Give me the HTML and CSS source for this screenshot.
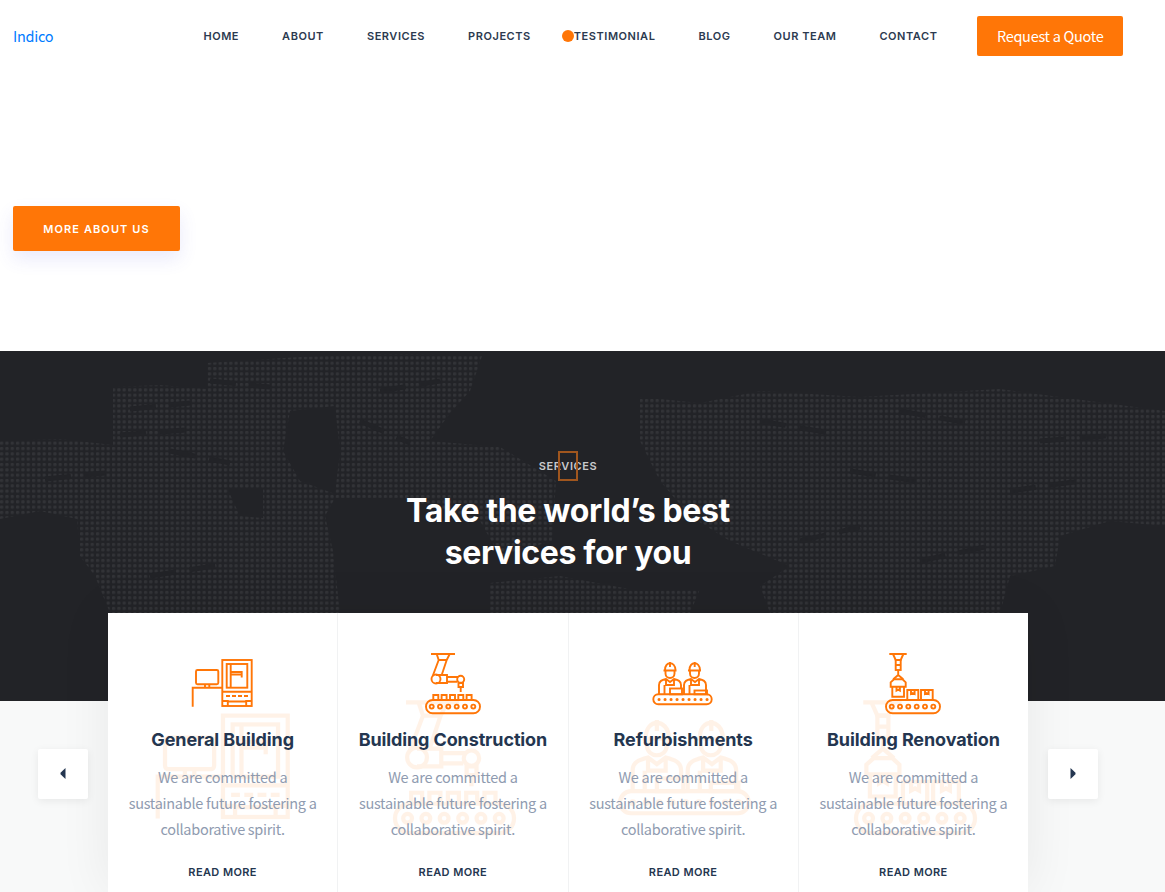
FILE: index.html
```html
<!DOCTYPE html>
<html lang="en">
<head>
  <meta charset="UTF-8">
  <meta name="viewport" content="width=device-width, initial-scale=1.0">
  <link rel="stylesheet" href="styles.css">
  <title>Indico</title>
</head>
<body>

  <!-- icons used twice per card: once small, once as the faint watermark -->
  <svg class="sprite" aria-hidden="true">
    <symbol id="ic_building" viewBox="0 0 64 64">
      <rect x="5" y="18" width="22.3" height="14.3" rx="1.5"/>
      <path d="M14 32.3v3.4M18.3 32.3v3.4M31.3 35.7H1.7v19"/>
      <rect x="31.3" y="8" width="29.4" height="46" />
      <rect x="35.7" y="12" width="20.6" height="23.7"/>
      <path d="M39.7 12v23.7M39.7 20h11v2.5h-11M50.7 22.5v3M31.3 39.7h29.4M35 44h4M41 44h4M47 44h4M53 44h4M31.3 49h5.5v5M60.7 49h-5.5v5M36.8 49.5h18.4"/>
    </symbol>
    <symbol id="ic_construction" viewBox="0 0 64 64">
      <path d="M10 2h24M15.7 2l2 6h8l3-6M17.7 8l-6 16M25.7 8l-5 15"/>
      <circle cx="15" cy="27" r="4.5"/>
      <path d="M15 23h11v8H15M26 25h11M26 29.7h10"/>
      <circle cx="39.7" cy="27.3" r="3.5"/>
      <path d="M37.5 31h4.5v4h-4.5zM39.7 35v5"/>
      <rect x="5" y="48" width="54" height="13.3" rx="6.6"/>
      <circle cx="10.7" cy="54.6" r="2"/><circle cx="19" cy="54.6" r="2"/><circle cx="27.3" cy="54.6" r="2"/>
      <circle cx="35.7" cy="54.6" r="2"/><circle cx="44" cy="54.6" r="2"/><circle cx="52.3" cy="54.6" r="2"/>
      <path d="M12.3 48v-5h5v5M20.6 48v-5h5v5M29 48v-5h5v5M37.3 48v-5h5v5M45.6 48v-5h5v5"/>
    </symbol>
    <symbol id="ic_refurb" viewBox="0 0 64 64">
      <rect x="2.3" y="42.3" width="58.4" height="10" rx="5"/>
      <path d="M8 47.500h.1M14 47.500h.1M20 47.500h.1M26 47.500h.1M32 47.500h.1M38 47.500h.1M44 47.500h.1M50 47.500h.1M56 47.500h.1" stroke-width="3" stroke-linecap="round"/>
      <path d="M12.5 18.5h13M14 18c0-9 10-9 10.500 0M19 10v5M14.500 19v2.500c0 6 9 6 9 0V19"/>
      <path d="M8 42V33c0-4 3-5 7-6l4 3 4-3c4 1 7 2 7 6v4M13.500 42v-9M15 27v6h8v-6"/>
      <rect x="19" y="36.500" width="12" height="5.800"/>
      <path d="M37 18.500h13M38.500 18c0-9 10-9 10.500 0M43.700 10v5M39 19v2.500c0 6 9 6 9 0V19"/>
      <path d="M33 42V33c0-4 3-5 7-6l4 3 4-3c4 1 7 2 7 6v9M38.500 42v-9M40 27v6h8v-6"/>
      <rect x="43.500" y="38.500" width="12.500" height="3.800"/>
    </symbol>
    <symbol id="ic_renovation" viewBox="0 0 64 64">
      <path d="M8.300 2h17.400M12 2l2.700 6h5l2.700-6"/>
      <rect x="14.700" y="8" width="5" height="10"/>
      <path d="M14.700 13h5M17.200 18v5M17.200 23l-5 4.300M17.200 23l5 4.300"/>
      <path d="M13 27.300h8.500l3.200 3v4.400H9.700v-4.400z"/>
      <path d="M11.300 34.700v10H23v-10M15.500 34.700v4l1.700-1 1.700 1v-4"/>
      <path d="M26.300 48V38h11v10M30 38v4l1.800-1 1.800 1v-4M40 48V38h11.700v10M44 38v4l1.800-1 1.800 1v-4"/>
      <rect x="5" y="48" width="54" height="13.300" rx="6.600"/>
      <circle cx="10.700" cy="54.600" r="2"/><circle cx="19" cy="54.600" r="2"/><circle cx="27.300" cy="54.600" r="2"/>
      <circle cx="35.700" cy="54.600" r="2"/><circle cx="44" cy="54.600" r="2"/><circle cx="52.300" cy="54.600" r="2"/>
    </symbol>
  </svg>

  <header class="top_bar">
    <a class="logo" href="#">Indico</a>
    <nav class="main_nav">
      <a href="#">Home</a>
      <a href="#">About</a>
      <a href="#">Services</a>
      <a href="#">Projects</a>
      <a class="nav_dot" href="#">Testimonial</a>
      <a href="#">Blog</a>
      <a href="#">Our Team</a>
      <a href="#">Contact</a>
    </nav>
    <a class="quote_btn" href="#">Request a Quote</a>
  </header>

  <section class="hero">
    <a class="more_btn" href="#">More About Us</a>
  </section>

  <section class="services_dark">
    <svg class="world_map" viewBox="0 0 1165 350" aria-hidden="true">
      <defs>
        <pattern id="dots" width="5.33" height="5.33" patternUnits="userSpaceOnUse">
          <rect width="3.2" height="3.2" rx="1" fill="#323337"/>
        </pattern>
      </defs>
      <path fill="url(#dots)" fill-rule="evenodd" d="M0 90L60 88L113 94L113 36L160 34L207 38L207 12L300 6L400 3L482 5L470 40L450 62L430 90L500 96L556 130L552 190L500 205L480 170L400 147L335 147L325 165L333 200L340 262L110 262L95 225L80 205L77 168L40 160L0 168ZM290 60L335 55L340 100L335 143L300 130L283 100ZM227 137L263 137L263 167L240 165Z"/>
      <path fill="url(#dots)" d="M640 46L700 52L760 40L860 46L930 42L1000 38L1090 50L1165 60L1165 175L1110 170L1060 185L1055 215L1010 225L1000 262L770 262L760 235L790 215L730 190L690 165L660 130L640 90Z"/>
      <path fill="url(#dots)" d="M490 232L560 225L640 240L700 238L690 262L490 262Z"/>
      <!-- broken coastlines and inland gaps -->
      <path class="map_gaps" d="M130 58L190 52M120 84L200 78M210 30L270 36M380 40L440 30M170 100L230 112M360 70L410 92M760 70L830 82M900 60L980 74M1040 90L1120 84M850 120L930 132M1010 140L1080 130M800 190L860 176M920 210L985 196M150 225L220 214M45 128L105 122"/>
    </svg>
    <div class="section_title">
      <span class="tofu_box"></span>
      <h5>Services</h5>
      <h2>Take the world&rsquo;s best<br>services for you</h2>
    </div>
  </section>

  <section class="services_light">
    <button class="arrow arrow_prev" aria-label="Previous">
      <svg width="6" height="11" viewBox="0 0 6 11"><path d="M5.500 0v11L0.500 6.300v-1.600z"/></svg>
    </button>
    <div class="card_row">
      <article class="card">
        <svg class="watermark"><use href="#ic_building"/></svg>
        <svg class="card_icon"><use href="#ic_building"/></svg>
        <h3>General Building</h3>
        <p>We are committed a sustainable future fostering a collaborative spirit.</p>
        <a class="read_more" href="#">Read More</a>
      </article>
      <article class="card">
        <svg class="watermark"><use href="#ic_construction"/></svg>
        <svg class="card_icon"><use href="#ic_construction"/></svg>
        <h3>Building Construction</h3>
        <p>We are committed a sustainable future fostering a collaborative spirit.</p>
        <a class="read_more" href="#">Read More</a>
      </article>
      <article class="card">
        <svg class="watermark"><use href="#ic_refurb"/></svg>
        <svg class="card_icon"><use href="#ic_refurb"/></svg>
        <h3>Refurbishments</h3>
        <p>We are committed a sustainable future fostering a collaborative spirit.</p>
        <a class="read_more" href="#">Read More</a>
      </article>
      <article class="card">
        <svg class="watermark"><use href="#ic_renovation"/></svg>
        <svg class="card_icon"><use href="#ic_renovation"/></svg>
        <h3>Building Renovation</h3>
        <p>We are committed a sustainable future fostering a collaborative spirit.</p>
        <a class="read_more" href="#">Read More</a>
      </article>
    </div>
    <button class="arrow arrow_next" aria-label="Next">
      <svg width="6" height="11" viewBox="0 0 6 11"><path d="M0.500 0v11l5-4.700v-1.600z"/></svg>
    </button>
  </section>

</body>
</html>
```
FILE: styles.css
```css
body,h2,h3,h5,p{
  margin:0px; padding:0px;
}

body{
  height:892px; overflow:hidden; background:#fff;
  font-family:"Noto Sans CJK SC","Noto Sans",sans-serif; font-size:14.500px; letter-spacing:-0.280px; color:#8f9bb0;
}

a{
  text-decoration:none;
}

.sprite{
  display:none;
}

/* header */

.top_bar{
  height:72px; padding:0px 42px 0px 13px; box-sizing:border-box;
  display:flex; align-items:center;
}

.logo{
  width:191px; padding-bottom:2px; color:#007bff;
}

.main_nav{
  display:flex; flex-shrink:0; gap:43px; margin-right:40px;
}

.main_nav a{
  position:relative; white-space:nowrap; font-family:Inter,"Liberation Sans",sans-serif; font-size:11px; font-weight:600;
  letter-spacing:0.550px; text-transform:uppercase; color:#2c3a50;
}

.nav_dot::before{
  content:""; width:12px; height:12px; border-radius:50%; background:#ff7607;
  position:absolute; left:-12px; top:1px;
}

.quote_btn{
  width:146px; height:40px; padding-bottom:2px; box-sizing:border-box; display:flex; align-items:center; justify-content:center;
  background:#ff7607; border-radius:2px; color:#fff;
}

/* hero */

.hero{
  height:279px; padding:134px 0px 0px 13px; box-sizing:border-box;
}

.more_btn{
  width:167px; height:45px; display:flex; align-items:center; justify-content:center;
  background:#ff7607; border-radius:2px; box-shadow:0px 8px 18px rgba(80,80,220,0.12);
  font-family:Inter,"Liberation Sans",sans-serif; font-size:11px; font-weight:600; letter-spacing:1.100px;
  text-transform:uppercase; color:#fff;
}

/* dark band */

.services_dark{
  height:350px; position:relative; overflow:hidden; background:#222327; text-align:center;
}

.world_map{
  width:100%; height:100%; position:absolute; left:0px; top:0px;
}

.map_gaps{
  fill:none; stroke:#222327; stroke-width:5px; stroke-dasharray:26 14;
}

.section_title{
  position:relative; padding:108px 29px 0px 0px;
}

.section_title h5{
  font-family:Inter,"Liberation Sans",sans-serif; font-size:11px; font-weight:600; line-height:14px;
  letter-spacing:0.600px; text-transform:uppercase; color:#c9cacc;
}

.section_title h2{
  margin-top:17px; font-family:Inter,"Liberation Sans",sans-serif; font-size:32px; font-weight:700;
  line-height:42px; letter-spacing:-0.350px; color:#fff;
}

.tofu_box{
  width:20px; height:30px; box-sizing:border-box; border:2px solid #a0561e;
  position:absolute; left:558px; top:100px;
}

/* cards */

.services_light{
  height:191px; padding-right:29px; box-sizing:border-box; position:relative; background:#f8f9f9;
  display:flex; justify-content:center;
}

.card_row{
  width:920px; height:279px; margin-top:-88px; display:flex; background:#fff;
  box-shadow:0px 0px 50px rgba(0,0,0,0.07);
}

.card{
  flex:1; position:relative; padding-top:39px; box-sizing:border-box; text-align:center;
  border-right:1px solid #f1f2f3;
}

.card:last-child{
  border-right:none;
}

.card_icon{
  width:64px; height:64px; display:block; margin:0px auto;
  fill:none; stroke:#ff7607; stroke-width:1.900;
}

.watermark{
  width:141px; height:141px; position:absolute; left:46px; top:85px;
  fill:none; stroke:#ff7607; stroke-width:1.900; opacity:0.09;
}

.card h3{
  position:relative; margin-top:11px; font-family:Inter,"Liberation Sans",sans-serif; font-size:18px; font-weight:700;
  line-height:26px; letter-spacing:-0.120px; color:#243650;
}

.card p{
  position:relative; margin:11px 20px 0px; line-height:26px;
}

.read_more{
  display:block; position:relative; margin-top:23px; font-family:Inter,"Liberation Sans",sans-serif;
  font-size:11px; font-weight:600; line-height:14px; letter-spacing:0.400px; text-transform:uppercase; color:#243650;
}

.arrow{
  width:50px; height:50px; padding:0px 0px 2px; border:none; border-radius:2px; background:#fff;
  box-shadow:0px 2px 8px rgba(0,0,0,0.07);
  display:flex; align-items:center; justify-content:center;
  position:absolute; top:48px; fill:#243650;
}

.arrow_prev{
  left:38px;
}

.arrow_next{
  right:67px;
}
```
